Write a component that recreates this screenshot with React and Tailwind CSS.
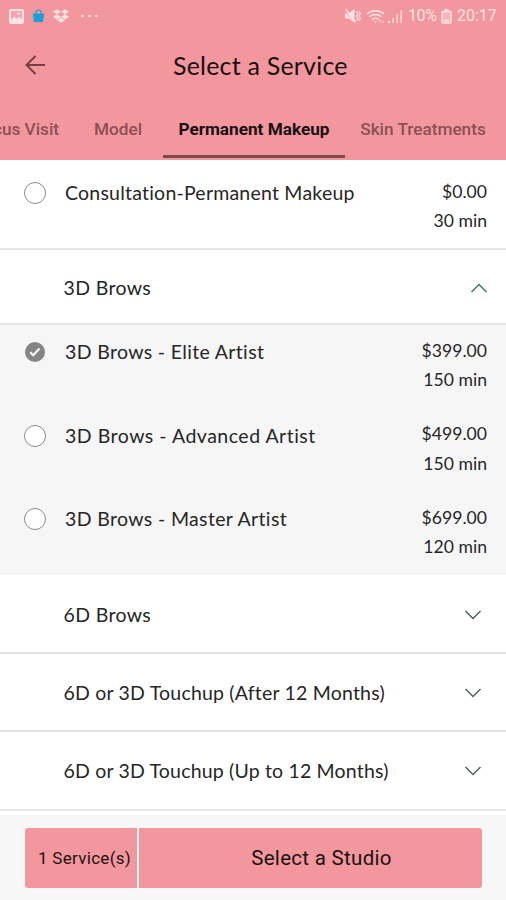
import React from 'react'
import { FaDropbox } from 'react-icons/fa'

const tabs = [
  { label: 'Focus Visit', className: 'w-[97px] -ml-[28px] pr-[10px] text-right' },
  { label: 'Model', className: 'w-[94px] pl-[4px] text-center' },
  { label: 'Permanent Makeup', className: 'w-[182px] text-center', active: true },
  { label: 'Skin Treatments', className: 'w-[156px] text-center' },
]

const brows = [
  { name: '3D Brows - Elite Artist', price: '$399.00', time: '150 min', selected: true, spacing: 'tracking-[0.34px]' },
  { name: '3D Brows - Advanced Artist', price: '$499.00', time: '150 min', spacing: 'tracking-[0.5px]' },
  { name: '3D Brows - Master Artist', price: '$699.00', time: '120 min', spacing: 'tracking-[0.35px]' },
]

function StatusBar() {
  return (
    <div className="flex h-8 items-center justify-between pl-[9px] pr-[9px] text-[#fde3e3]">
      <div className="flex items-center">
        <svg className="h-[15px] w-[15px]" viewBox="0 0 15 15">
          <rect x="1" y="1" width="13" height="13" rx="1" fill="#f5a5aa" stroke="currentColor" strokeWidth="2" />
          <path d="M2 11 5.2 7.6 7.5 9.8 10 7.5 13 10.5V13H2z" fill="currentColor" />
          <circle cx="9.5" cy="4.8" r="1.3" fill="currentColor" />
        </svg>
        <svg className="ml-2 h-[14px] w-[13px]" viewBox="0 0 13 14">
          <path d="M4 5V3.5a2.5 2.5 0 0 1 5 0V5" fill="none" stroke="#169fdb" strokeWidth="1.2" />
          <path d="M.8 4.5h11.4L11 13H2z" fill="#169fdb" />
        </svg>
        <FaDropbox className="ml-2 h-4 w-4" />
        <div className="ml-3 flex gap-[4.5px]">
          <i className="h-[2.5px] w-[2.5px] rounded-full bg-current" />
          <i className="h-[2.5px] w-[2.5px] rounded-full bg-current" />
          <i className="h-[2.5px] w-[2.5px] rounded-full bg-current" />
        </div>
      </div>
      <div className="flex items-center font-['Roboto',sans-serif] text-[16px]">
        <svg className="h-4 w-[17px]" viewBox="0 0 17 16">
          <path d="M1 5.5h3.5L10.5 1v14l-6-4.5H1z" fill="currentColor" />
          <path d="m1.5 1 10 13" stroke="currentColor" strokeWidth="1.5" />
          <path d="m.5 2.5 10 13" stroke="#f3979e" strokeWidth=".7" />
          <path d="m12.5 3 1.5 2.5-1.5 2.5 1.5 2.5-1.5 2.5M15 3l1.5 2.5L15 8l1.5 2.5L15 13" fill="none" stroke="currentColor" strokeWidth="1.1" />
        </svg>
        <svg className="ml-[5px] h-[15px] w-[20px]" viewBox="0 0 20 15" fill="none" stroke="currentColor" strokeWidth="1.5">
          <path d="M1 4.8a13 13 0 0 1 17 0M3.5 7.8a9 9 0 0 1 12 0M6 10.6a5 5 0 0 1 7 0" />
          <path d="m8 12.2 1.5 1.8 1.5-1.8z" fill="currentColor" stroke="none" />
          <path d="M14 11v3m0-3-1.3 1.3M14 11l1.3 1.3M17 14v-3m0 3-1.3-1.3M17 14l1.3-1.3" strokeWidth=".8" opacity=".6" />
        </svg>
        <svg className="ml-[2px] h-[15px] w-[15px]" viewBox="0 0 15 15" fill="currentColor">
          <path d="M0 12h2v2H0zM4.5 9h1.3v5H4.5zM8.5 5h1.3v9H8.5zM12.5 1h1.3v13h-1.3z" />
        </svg>
        <span className="ml-[5px] w-[30px] whitespace-nowrap tracking-[-0.4px]">10%</span>
        <svg className="ml-[3px] mr-[1px] h-[15px] w-[11px]" viewBox="0 0 11 15">
          <path d="M3.5 0h4v2h-4z" fill="currentColor" />
          <rect x="1" y="2.5" width="9" height="11.5" rx="1" fill="#f8b6b8" stroke="currentColor" strokeWidth="1.5" />
          <path d="M3 10.5h5v2H3z" fill="currentColor" />
        </svg>
        <span className="ml-1 w-[40px] whitespace-nowrap">20:17</span>
      </div>
    </div>
  )
}

function Radio({ selected }) {
  if (selected) {
    return (
      <svg className="h-[22px] w-[22px]" viewBox="0 0 22 22">
        <circle cx="11" cy="11" r="10" fill="#858585" />
        <path d="m6.2 11.2 3 3 6.3-6.6" fill="none" stroke="#fff" strokeWidth="2.2" />
      </svg>
    )
  }
  return <span className="h-[22px] w-[22px] rounded-full border border-[#8c8c8c] bg-white" />
}

function Service({ name, price, time, selected, spacing }) {
  return (
    <div className="flex h-[58px] items-start pl-6 pr-[19px]">
      <div className="flex h-[30px] items-center">
        <Radio selected={selected} />
        <span className={`ml-[19px] whitespace-nowrap text-[19.5px] ${spacing}`}>{name}</span>
      </div>
      <div className="-mt-[1.5px] ml-auto text-right text-[17.6px] leading-[29.5px]">
        <p>{price}</p>
        <p>{time}</p>
      </div>
    </div>
  )
}

function Chevron({ up }) {
  return (
    <svg
      className={`h-[10px] w-[18px] ${up ? 'mr-[-6px] rotate-180 text-[#3c7a68]' : 'text-[#4d605f]'}`}
      viewBox="0 0 18 10"
      fill="none"
      stroke="currentColor"
      strokeWidth="1.5"
    >
      <path d="m1.5 1 7.5 7.5L16.5 1" />
    </svg>
  )
}

function Category({ name, up, className }) {
  return (
    <div className={`flex items-center justify-between border-b-2 border-[#e5e5e5] pl-[63.5px] pr-[24.5px] ${className}`}>
      <span className="whitespace-nowrap text-[19.5px]">{name}</span>
      <Chevron up={up} />
    </div>
  )
}

export default function App() {
  return (
    <div className="flex h-[900px] w-[506px] flex-col overflow-hidden bg-white font-['Lato',sans-serif] text-[#262626]">
      <header className="flex h-40 flex-col bg-[#f3979e]">
        <StatusBar />
        <div className="flex h-[68px] items-center pl-[25px]">
          <svg className="-mt-[2px] h-5 w-5" viewBox="0 0 20 20" fill="none" stroke="#713f44" strokeWidth="2">
            <path d="M20 10H2M10.5 1 1.5 10l9 9" />
          </svg>
          <h1 className="ml-[128px] whitespace-nowrap text-[25px] tracking-[0.2px] text-[#171011]">Select a Service</h1>
        </div>
        <nav className="flex h-[60px] whitespace-nowrap font-['Roboto',sans-serif] text-[17.2px] font-medium leading-[58px]">
          {tabs.map((tab) => (
            <div
              key={tab.label}
              className={`h-[58px] shrink-0 ${tab.className} ${
                tab.active ? 'border-b-[3px] border-[#7a4c50] font-bold text-[#171011]' : 'text-[#8b4f55]'
              }`}
            >
              {tab.label}
            </div>
          ))}
        </nav>
      </header>

      <main className="flex-1">
        <div className="h-[90px] border-b-2 border-[#e5e5e5] pt-[18px]">
          <Service name="Consultation-Permanent Makeup" price="$0.00" time="30 min" spacing="tracking-[0.22px]" />
        </div>
        <Category name="3D Brows" up className="h-[75px] pt-[3px] tracking-[0.35px]" />
        <div className="flex h-[250px] flex-col gap-[25.5px] bg-[#f6f6f6] pt-[12px]">
          {brows.map((service) => (
            <Service key={service.name} {...service} />
          ))}
        </div>
        <Category name="6D Brows" className="h-[79px] pt-[2px] tracking-[0.35px]" />
        <Category name="6D or 3D Touchup (After 12 Months)" className="h-[78px] pt-[2px] tracking-[0.2px]" />
        <Category name="6D or 3D Touchup (Up to 12 Months)" className="h-[79px] pt-[1px] tracking-[0.18px]" />
      </main>

      <footer className="flex h-[85px] gap-[2px] bg-[#f7f7f7] pl-[25px] pr-6 pt-[13px] font-['Roboto',sans-serif] text-[#1b1112]">
        <div className="flex h-[60px] w-[112px] items-center justify-center whitespace-nowrap rounded-l-[3px] bg-[#f3979e] pl-[7px] pt-[2px] text-[17px] tracking-[0.3px]">
          1 Service(s)
        </div>
        <button className="h-[60px] flex-1 rounded-r-[3px] bg-[#f3979e] pl-[22px] text-[20.5px] tracking-[0.3px]">Select a Studio</button>
      </footer>
    </div>
  )
}
